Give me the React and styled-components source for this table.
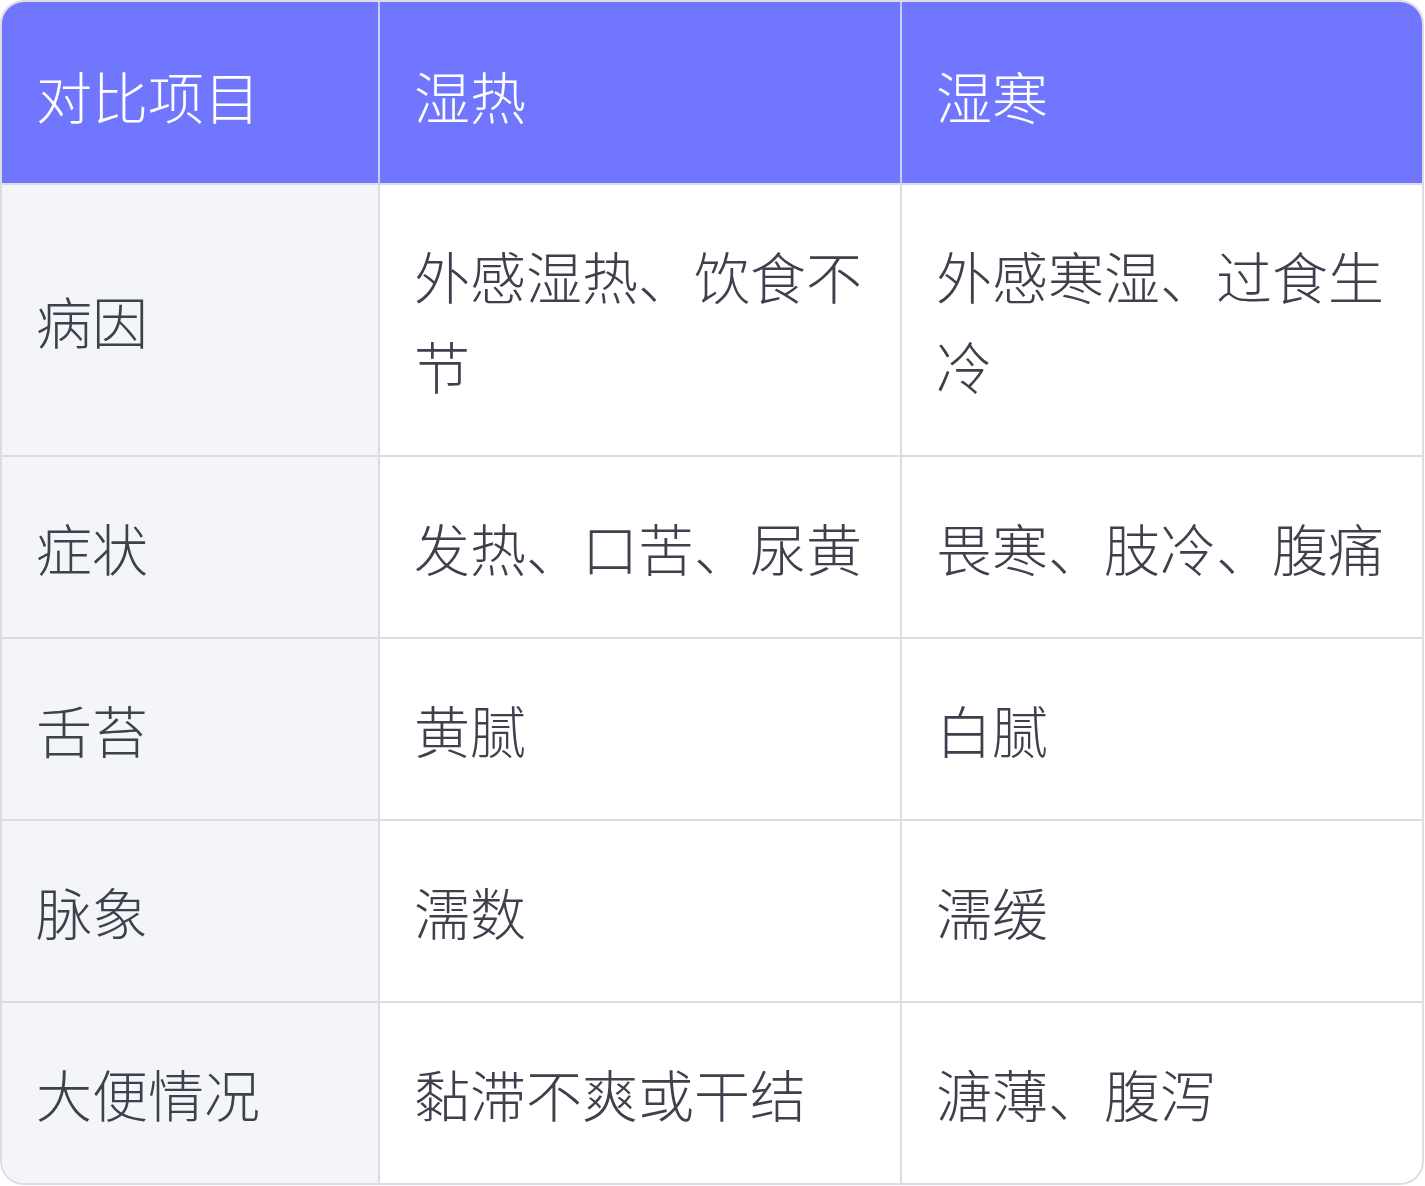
import React from 'react';
import styled, { createGlobalStyle } from 'styled-components';

const rows = [
  { item: '病因', hot: '外感湿热、饮食不节', cold: '外感寒湿、过食生冷' },
  { item: '症状', hot: '发热、口苦、尿黄', cold: '畏寒、肢冷、腹痛' },
  { item: '舌苔', hot: '黄腻', cold: '白腻' },
  { item: '脉象', hot: '濡数', cold: '濡缓' },
  { item: '大便情况', hot: '黏滞不爽或干结', cold: '溏薄、腹泻' },
];

const GlobalStyle = createGlobalStyle`
  body {
    margin: 0;
    background: #ffffff;
    font-family: 'Noto Sans CJK SC', 'Noto Sans', sans-serif;
  }
`;

const Wrapper = styled.div`
  width: 1424px;
  box-sizing: border-box;
  border: 2px solid #dcdde2;
  border-radius: 24px;
  overflow: hidden;
`;

const Table = styled.table`
  width: 100%;
  table-layout: fixed;
  border-collapse: separate;
  border-spacing: 0;
`;

const HeadCell = styled.th`
  background: #7176ff;
  color: #ffffff;
  font-weight: 300;
  text-align: left;
  font-size: 56px;
  line-height: 90px;
  padding: 48px 35px 43px 34px;
  border-bottom: 2px solid #dcdde2;
  border-right: ${p => (p.$last ? 'none' : '2px solid #c9cbf0')};
`;

const Cell = styled.td`
  background: ${p => (p.$first ? '#f4f5f9' : '#ffffff')};
  color: #3e404c;
  font-weight: 300;
  font-size: 56px;
  line-height: 90px;
  padding: 45px 35px 45px 34px;
  vertical-align: middle;
  border-bottom: ${p => (p.$bottom ? 'none' : '2px solid #dcdde2')};
  border-right: ${p => (p.$last ? 'none' : '2px solid #dcdde2')};
`;

export default function App() {
  return (
    <>
      <GlobalStyle />
      <Wrapper>
        <Table>
          <colgroup>
            <col style={{ width: 378 }} />
            <col style={{ width: 522 }} />
            <col />
          </colgroup>
          <thead>
            <tr>
              <HeadCell>对比项目</HeadCell>
              <HeadCell>湿热</HeadCell>
              <HeadCell $last>湿寒</HeadCell>
            </tr>
          </thead>
          <tbody>
            {rows.map((r, i) => {
              const bottom = i === rows.length - 1;
              return (
                <tr key={r.item}>
                  <Cell $first $bottom={bottom}>{r.item}</Cell>
                  <Cell $bottom={bottom}>{r.hot}</Cell>
                  <Cell $last $bottom={bottom}>{r.cold}</Cell>
                </tr>
              );
            })}
          </tbody>
        </Table>
      </Wrapper>
    </>
  );
}
